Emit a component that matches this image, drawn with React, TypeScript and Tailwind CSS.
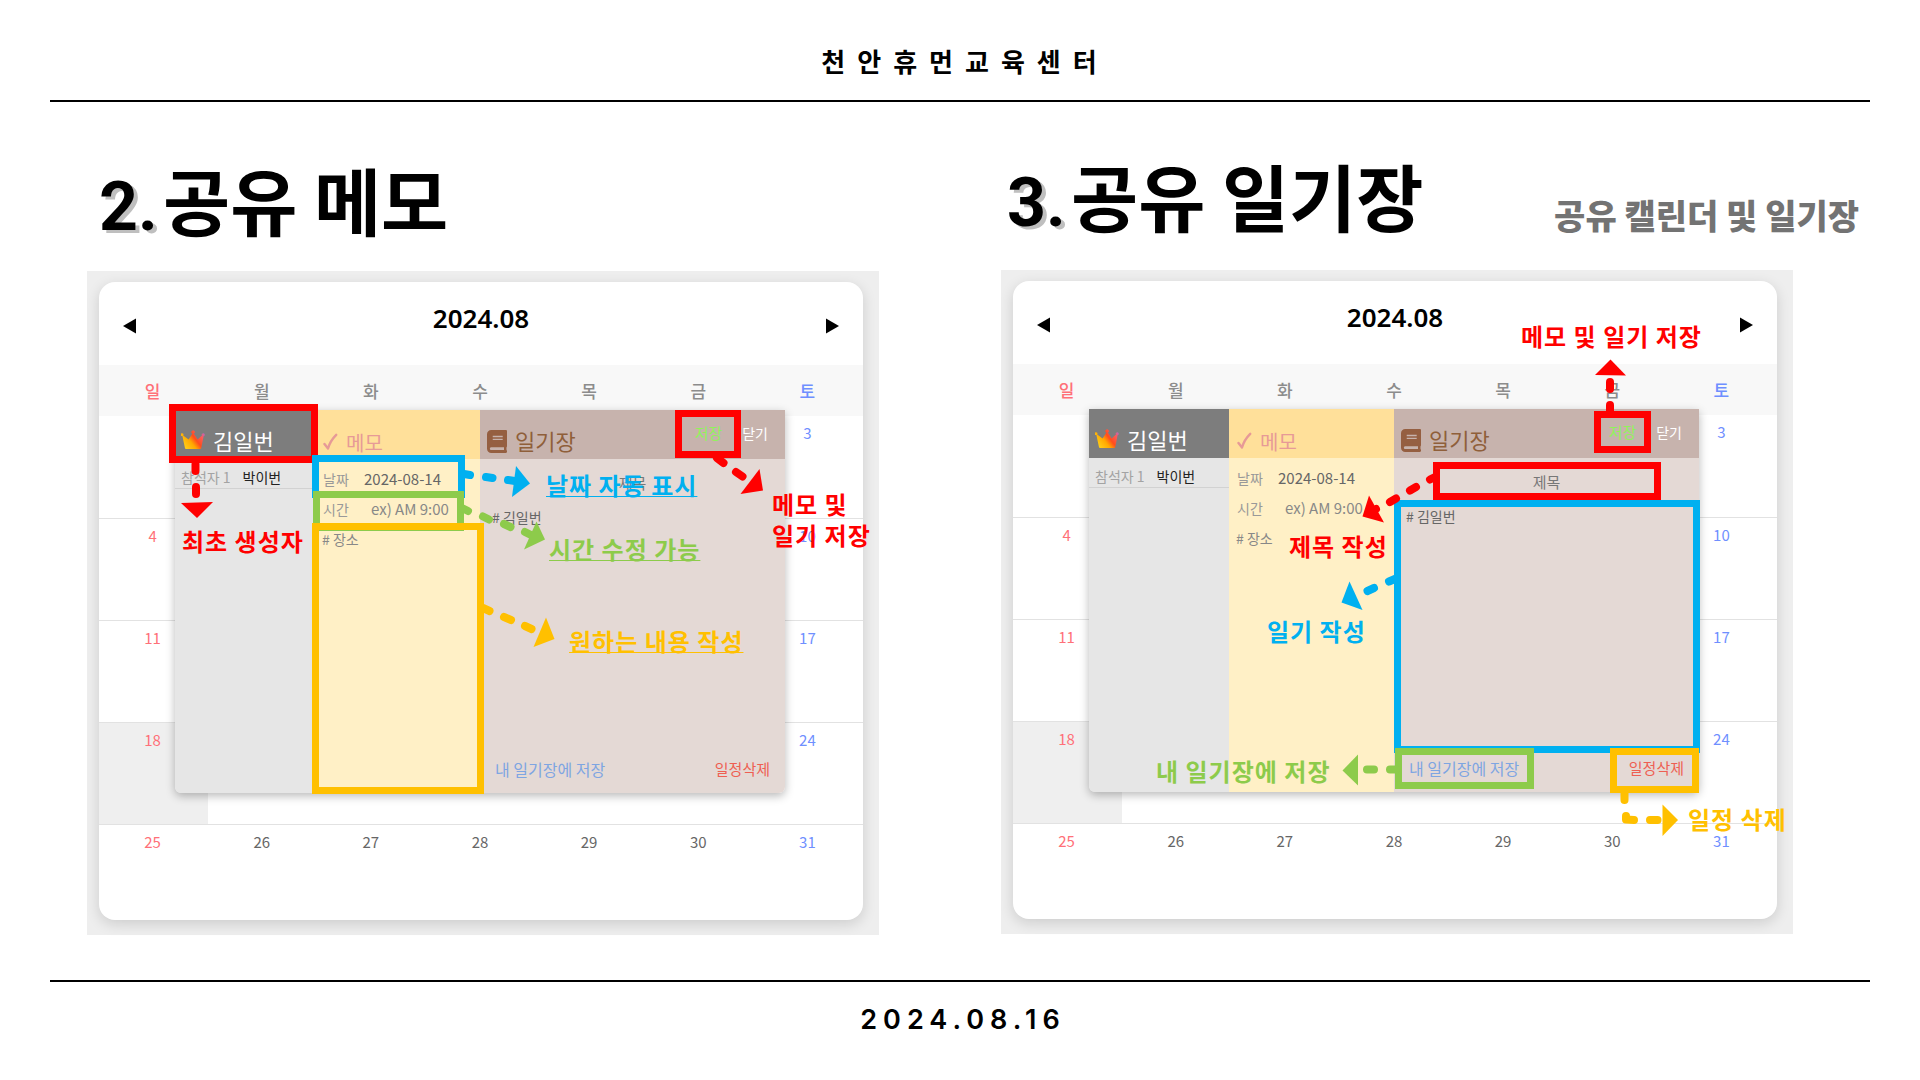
import { useId } from "react";
import type { ReactNode } from "react";
import { FaBook } from "react-icons/fa";

const WEEKDAYS = ["일", "월", "화", "수", "목", "금", "토"];

const WEEKS: string[][] = [
  ["", "", "", "", "", "", "3"],
  ["4", "", "", "", "", "", "10"],
  ["11", "", "", "", "", "", "17"],
  ["18", "", "", "", "", "", "24"],
  ["25", "26", "27", "28", "29", "30", "31"],
];

const RED = "#ff0000";
const BLUE = "#00b0f0";
const GREEN = "#8dcb4b";
const AMBER = "#ffc000";

function dayColor(index: number, rest: string) {
  if (index === 0) return "text-[#ff7078]";
  if (index === 6) return "text-[#6f8fff]";
  return rest;
}

function Crown() {
  const id = useId();
  return (
    <svg viewBox="0 0 24 20" className="h-5 w-6 shrink-0" aria-hidden="true">
      <defs>
        <linearGradient id={id} x1="0" y1="0.7" x2="1" y2="0.1">
          <stop offset="0" stopColor="#ffd21a" />
          <stop offset="0.35" stopColor="#ffa800" />
          <stop offset="0.55" stopColor="#ff4d1c" />
          <stop offset="0.8" stopColor="#ff5a5a" />
          <stop offset="1" stopColor="#a86ad8" />
        </linearGradient>
      </defs>
      <path
        d="M2.2 5.4 7.6 9.6 11.4 3.6a1.7 1.7 0 1 1 1.4 0L16.6 9.6 21 5.6a1.5 1.5 0 1 1 1.6.6L20.2 18.2Q20 19 19.2 19H5Q4.200 19 4 18.200L1.400 6A1.400 1.400 0 1 1 2.200 5.400Z"
        fill={`url(#${id})`}
      />
    </svg>
  );
}

function Check() {
  return (
    <svg viewBox="0 0 15 18" className="h-[18px] w-[15px] shrink-0" aria-hidden="true">
      <path
        d="M1.500 11 5 15.500Q7 8 13.200 1.800"
        fill="none"
        stroke="#e79a97"
        strokeWidth="2.400"
        strokeLinecap="round"
        strokeLinejoin="round"
      />
    </svg>
  );
}

function SchedulePopup() {
  const id = useId();
  return (
    <div className="absolute left-[76px] right-[78px] top-[128px] grid h-[383px] grid-cols-[140fr_165fr_305fr] overflow-hidden rounded-b-md shadow-[0_3px_10px_rgba(0,0,0,0.28)]">
      <section className="flex flex-col bg-[#e6e6e6]">
        <h4 className="flex h-[49px] items-end gap-2 bg-[#7d7d7d] pb-[3px] pl-1.5 text-[22px] leading-8 text-white">
          <span className="pb-1.5">
            <Crown />
          </span>
          김일번
        </h4>
        <p className="flex h-[30px] items-center gap-3 border-b border-[#d2d2d2] pt-1.5 pl-1.5 text-sm text-[#a3a3a3]">
          참석자 1 <span className="text-[#222]">박이번</span>
        </p>
      </section>

      <section className="flex flex-col bg-[#fff0c6] text-sm text-[#999]">
        <h4 className="flex h-[49px] items-end gap-2 bg-[#ffe09a] pl-2 text-xl leading-8 text-[#e79a97]">
          <span className="pb-2">
            <Check />
          </span>
          메모
        </h4>
        <div className="flex h-9 items-center pl-2 pt-1">
          <label htmlFor={`${id}-date`} className="w-[41px]">
            날짜
          </label>
          <input
            id={`${id}-date`}
            defaultValue="2024-08-14"
            className="w-[110px] bg-transparent text-[15px] text-[#666] outline-none"
          />
        </div>
        <div className="flex h-7 items-center pl-2">
          <label htmlFor={`${id}-time`} className="w-12">
            시간
          </label>
          <input
            id={`${id}-time`}
            placeholder="ex) AM 9:00"
            className="w-[100px] bg-transparent text-[15px] outline-none placeholder:text-[#888]"
          />
        </div>
        <textarea
          aria-label="메모 내용"
          placeholder="# 장소"
          className="min-h-0 w-full flex-1 resize-none bg-transparent pl-[7px] pt-1.5 text-sm outline-none placeholder:text-[#888]"
        />
      </section>

      <section className="flex flex-col bg-[#e4d9d5]">
        <div className="flex h-[49px] justify-between bg-[#c7b3ad]">
          <h4 className="flex items-end gap-2 pb-[3px] pl-[7px] text-[22px] leading-8 text-[#8f5f3a]">
            <FaBook className="mb-[3px] h-[23px] w-5 text-[#955f41]" aria-hidden="true" />
            일기장
          </h4>
          <div className="flex items-start gap-5 pr-[17px] pt-[11px] leading-6">
            <button type="button" className="text-[15px] leading-6 text-[#90f25c]">
              저장
            </button>
            <button type="button" className="text-sm leading-6 text-white">
              닫기
            </button>
          </div>
        </div>
        <input
          aria-label="제목"
          placeholder="제목"
          className="h-12 w-full bg-transparent pb-0.5 text-center text-[15px] outline-none placeholder:text-[#777]"
        />
        <textarea
          aria-label="일기 내용"
          defaultValue="# 김일번"
          className="min-h-0 w-full flex-1 resize-none bg-transparent pl-3 text-sm text-[#666] outline-none"
        />
        <div className="flex h-12 items-center justify-between px-[15px]">
          <button type="button" className="text-base text-[#7ea5e2]">
            내 일기장에 저장
          </button>
          <button type="button" className="text-[15px] text-[#ee5f52]">
            일정삭제
          </button>
        </div>
      </section>
    </div>
  );
}

function Calendar() {
  return (
    <div className="relative rounded-[16px] bg-white pb-px shadow-[0_4px_14px_rgba(0,0,0,0.14)]">
      <div className="flex h-[83px] items-start justify-between px-6">
        <button type="button" aria-label="이전 달" className="mt-9">
          <svg viewBox="0 0 14 16" className="h-4 w-[14px]" aria-hidden="true">
            <path d="M0 8 13 0.500V15.500Z" fill="#000" />
          </svg>
        </button>
        <h3 className="mt-[18px] font-['Noto_Sans'] text-[26px] font-semibold leading-9 text-black">2024.08</h3>
        <button type="button" aria-label="다음 달" className="mt-9">
          <svg viewBox="0 0 14 16" className="h-4 w-[14px]" aria-hidden="true">
            <path d="M14 8 1 0.500V15.500Z" fill="#000" />
          </svg>
        </button>
      </div>
      <table className="w-full table-fixed border-collapse text-center">
        <thead>
          <tr className="h-[51px] bg-[#f8f8f8]">
            {WEEKDAYS.map((day, i) => (
              <th key={day} className={`pr-0.5 text-[17px] font-medium ${dayColor(i, "text-[#8c8c8c]")}`}>
                {day}
              </th>
            ))}
          </tr>
        </thead>
        <tbody>
          {WEEKS.map((week, w) => (
            <tr key={w} className="h-[102px] border-b border-[#e2e2e2] last:h-[95px] last:border-b-0">
              {week.map((day, i) => (
                <td
                  key={i}
                  className={`pr-0.5 pt-[5px] align-top text-[15px] leading-6 ${dayColor(i, "text-[#666]")} ${
                    day === "18" ? "bg-[#efefef]" : ""
                  }`}
                >
                  {day}
                </td>
              ))}
            </tr>
          ))}
        </tbody>
      </table>
      <SchedulePopup />
    </div>
  );
}

type ArrowProps = { color: string; dashes: string; head: string };

function Arrow({ color, dashes, head }: ArrowProps) {
  return (
    <g>
      <path d={dashes} fill="none" stroke={color} strokeWidth="8" strokeLinecap="round" strokeLinejoin="round" />
      <polygon points={head} fill={color} />
    </g>
  );
}

function Note({ className, children }: { className: string; children: ReactNode }) {
  return (
    <p
      className={`absolute whitespace-nowrap text-2xl font-bold leading-[31px] tracking-[1px] decoration-1 underline-offset-1 ${className}`}
    >
      {children}
    </p>
  );
}

function Figure({ children }: { children: ReactNode }) {
  return (
    <figure className="relative bg-[#eeeeee] pb-[15px] pl-3 pr-4 pt-[11px]">
      <Calendar />
      {children}
    </figure>
  );
}

function MemoFigure() {
  return (
    <Figure>
      <div className="absolute left-[82px] top-[133px] h-[59px] w-[149px] border-[7px] border-[#ff0000]" />
      <div className="absolute left-[225px] top-[184px] h-[43px] w-[153px] border-[7px] border-[#00b0f0]" />
      <div className="absolute left-[226px] top-[220px] h-[40px] w-[151px] border-[7px] border-[#8dcb4b]" />
      <div className="absolute left-[225px] top-[252px] h-[271px] w-[172px] border-[7px] border-[#ffc000]" />
      <div className="absolute left-[588px] top-[139px] h-[48px] w-[66px] border-[7px] border-[#ff0000]" />
      <svg viewBox="87 271 791 664" className="absolute left-0 top-0 h-[664px] w-[791px]" aria-hidden="true">
        <Arrow color={RED} dashes="M195.500 464V471M196 487V494" head="181,503 213,502 197,518" />
        <Arrow color={BLUE} dashes="M464 474 470 475M486 477 492.500 478M508 480 518 481.500" head="516,466 530,483.500 512,497" />
        <Arrow color={GREEN} dashes="M463 508.500 468 511M483 516.500 489 519.500M504 524 510.500 527M525 532 533 536" head="536.500,521.500 545,539.500 524,549.500" />
        <Arrow color={AMBER} dashes="M483 608 489.500 611M504 617 511 620M525 626 531.500 629" head="546,617.500 554.500,639 533.500,647" />
        <Arrow color={RED} dashes="M717 458 723.500 463M736 472 742.500 476.500" head="759.500,469 763,490.500 740.500,494" />
      </svg>
      <Note className="left-[95px] top-[254px] text-[#ff0000]">최초 생성자</Note>
      <Note className="left-[459px] top-[198px] text-[#00b0f0] underline">날짜 자동 표시</Note>
      <Note className="left-[462px] top-[262px] text-[#8dcb4b] underline">시간 수정 가능</Note>
      <Note className="left-[482px] top-[354px] text-[#ffc000] underline">원하는 내용 작성</Note>
      <Note className="left-[685px] top-[217px] text-[#ff0000]">
        메모 및
        <br />
        일기 저장
      </Note>
    </Figure>
  );
}

function DiaryFigure() {
  return (
    <Figure>
      <div className="absolute left-[593px] top-[141px] h-[42px] w-[57px] border-[7px] border-[#ff0000]" />
      <div className="absolute left-[432px] top-[192px] h-[38px] w-[228px] border-[7px] border-[#ff0000]" />
      <div className="absolute left-[393px] top-[230px] h-[253px] w-[306px] border-[7px] border-[#00b0f0]" />
      <div className="absolute left-[394px] top-[478px] h-[41px] w-[139px] border-[7px] border-[#8dcb4b]" />
      <div className="absolute left-[609px] top-[478px] h-[45px] w-[89px] border-[7px] border-[#ffc000]" />
      <svg viewBox="1001 270 791 664" className="absolute left-0 top-0 h-[664px] w-[791px]" aria-hidden="true">
        <Arrow color={RED} dashes="M1610 412V405M1610 389V382" head="1610.500,359.500 1595,375 1626,375.500" />
        <Arrow color={RED} dashes="M1434 477.500 1430 479.500M1416 487 1410 490.500M1396 498.500 1390 502M1376 509 1374 510" head="1369,495.500 1384,522.500 1362.500,516.500" />
        <Arrow color={BLUE} dashes="M1396 578.500 1389 581.500M1374 588 1367.500 591" head="1349.500,581.500 1362.500,610 1341.500,602.500" />
        <Arrow color={GREEN} dashes="M1396 769.500H1390M1374 769.500H1367" head="1358,754.500 1358,785.500 1342.500,770.500" />
        <Arrow color={AMBER} dashes="M1624.500 793V800M1626 816V819.500L1634 820M1650 820H1657.500" head="1662.500,804.500 1678,820 1662.500,836" />
      </svg>
      <Note className="left-[520px] top-[50px] text-[#ff0000]">메모 및 일기 저장</Note>
      <Note className="left-[288px] top-[260px] text-[#ff0000]">제목 작성</Note>
      <Note className="left-[266px] top-[345px] text-[#00b0f0]">일기 작성</Note>
      <Note className="left-[155px] top-[485px] text-[#8dcb4b]">내 일기장에 저장</Note>
      <Note className="left-[687px] top-[533px] text-[#ffc000]">일정 삭제</Note>
    </Figure>
  );
}

function Title({ number, children }: { number: string; children: ReactNode }) {
  return (
    <h2 className="flex items-baseline whitespace-nowrap text-[73px] font-bold leading-[72px] text-black">
      <span className="w-16 shrink-0 font-['Roboto'] text-[68px] [text-shadow:4px_3px_0_#bfbfbf]">{number}</span>
      {children}
    </h2>
  );
}

export default function App() {
  return (
    <div className="min-h-screen bg-white font-['Noto_Sans_CJK_KR',sans-serif] text-black">
      <header className="mx-[50px] flex h-[102px] items-center justify-center border-b-2 border-black">
        <p className="pl-2.5 pt-[22px] text-[26px] font-bold leading-9 tracking-[12px]">천안휴먼교육센터</p>
      </header>

      <main className="grid grid-cols-2 gap-[122px] pb-[45px] pl-[87px] pr-[127px]">
        <section className="min-w-0">
          <div className="h-[169px] pl-3 pt-[60px]">
            <Title number="2.">공유 메모</Title>
          </div>
          <MemoFigure />
        </section>
        <section className="min-w-0">
          <div className="-mr-[66px] flex h-[168px] items-start justify-between pl-[6px] pt-14">
            <Title number="3.">공유 일기장</Title>
            <p className="mt-[37px] whitespace-nowrap text-[34px] font-black leading-10 text-[#737373]">
              공유 캘린더 및 일기장
            </p>
          </div>
          <DiaryFigure />
        </section>
      </main>

      <footer className="mx-[50px] border-t-2 border-black pt-5 text-center">
        <p className="pl-1.5 font-['Inter'] text-[27px] font-semibold leading-9 tracking-[6px]">2024.08.16</p>
      </footer>
    </div>
  );
}
